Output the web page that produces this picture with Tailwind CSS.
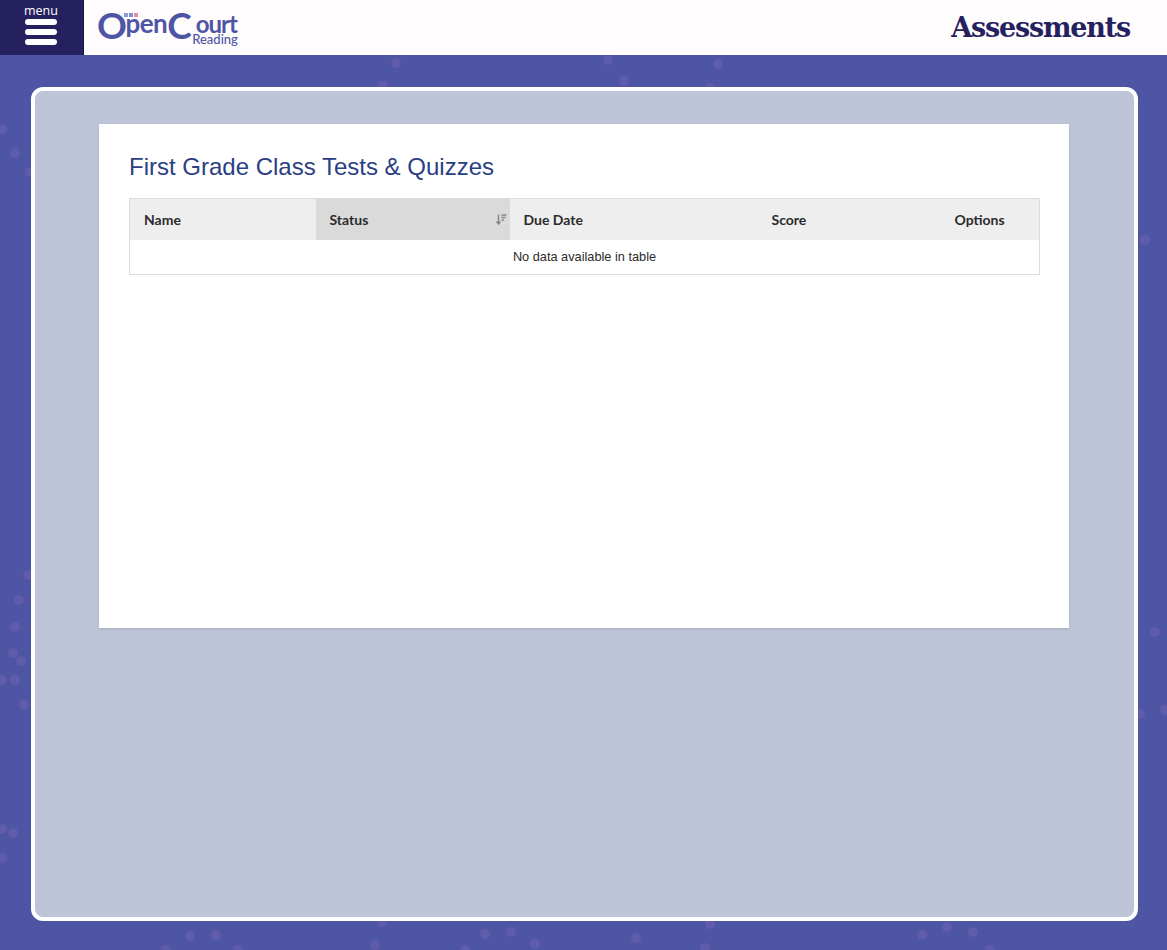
<!DOCTYPE html>
<html lang="en">
<head>
    <meta charset="UTF-8">
    <title>Assessments - Open Court Reading</title>
    <script src="https://cdn.jsdelivr.net/npm/@tailwindcss/browser@4"></script>
</head>
<body class="bg-[#4f55a5] font-['Lato',sans-serif]">
<div class="relative flex flex-col h-[950px] overflow-hidden">
    <!-- background dots -->
    <svg class="absolute inset-0" width="1167" height="950" fill="#5f5cab">
        <circle cx="396" cy="63" r="5"/><circle cx="608" cy="60" r="5"/><circle cx="624" cy="81" r="5"/><circle cx="718" cy="64" r="5"/><circle cx="383" cy="86" r="5"/><circle cx="710" cy="88" r="5"/>
        <circle cx="2" cy="129" r="5"/><circle cx="15" cy="153" r="5"/><circle cx="30" cy="172" r="5"/><circle cx="28" cy="575" r="5"/><circle cx="19" cy="600" r="5"/><circle cx="15" cy="627" r="5"/><circle cx="13" cy="653" r="5"/><circle cx="21" cy="661" r="5"/><circle cx="2" cy="680" r="5"/><circle cx="15" cy="680" r="5"/><circle cx="24" cy="705" r="5"/><circle cx="2" cy="829" r="5"/><circle cx="13" cy="833" r="5"/><circle cx="2" cy="858" r="5"/>
        <circle cx="1145" cy="240" r="5"/><circle cx="1155" cy="632" r="5"/><circle cx="1140" cy="714" r="5"/><circle cx="1165" cy="710" r="5"/>
        <circle cx="190" cy="936" r="5"/><circle cx="216" cy="935" r="5"/><circle cx="166" cy="950" r="5"/><circle cx="238" cy="950" r="5"/><circle cx="375" cy="945" r="5"/><circle cx="382" cy="922" r="5"/><circle cx="465" cy="950" r="5"/><circle cx="485" cy="934" r="5"/><circle cx="511" cy="932" r="5"/><circle cx="535" cy="944" r="5"/><circle cx="636" cy="938" r="5"/><circle cx="710" cy="924" r="5"/><circle cx="705" cy="948" r="5"/><circle cx="922" cy="935" r="5"/><circle cx="947" cy="927" r="5"/><circle cx="973" cy="932" r="5"/><circle cx="990" cy="950" r="5"/>
    </svg>

    <!-- Header -->
    <header class="relative flex items-center h-[55px] bg-[#fffcfd]">
        <button class="flex flex-col items-center w-[84px] h-[55px] bg-[#25215f] border-r border-[#14123f] pt-[4px] pr-[1px]">
            <span class="text-[12.5px] leading-[14px] text-white font-['Open_Sans',sans-serif]">menu</span>
            <span class="flex flex-col gap-[4px] mt-[1px]">
                <span class="block w-[32px] h-[6px] rounded-[3px] bg-white"></span>
                <span class="block w-[32px] h-[6px] rounded-[3px] bg-white"></span>
                <span class="block w-[32px] h-[6px] rounded-[3px] bg-white"></span>
            </span>
        </button>
        <!-- Logo -->
        <div class="relative flex items-start w-[145px] h-[55px] ml-[13px] text-[#4f55a5] font-['Lato',sans-serif] font-bold">
            <span class="text-[37px] leading-[36px] mt-[7px] tracking-[-1.5px]">O</span>
            <span class="text-[26px] leading-[26px] mt-[10px] tracking-[-0.5px]">pen</span>
            <span class="text-[37px] leading-[36px] mt-[7px] tracking-[-0.5px]">C</span>
            <div class="flex flex-col items-end ml-[1px] mt-[14px]">
                <span class="text-[24px] leading-[19px] tracking-[-1px] pr-[1px]">ourt</span>
                <span class="text-[13px] leading-[12px] font-medium">Reading</span>
            </div>
            <svg class="absolute left-[27px] top-[13px]" width="14" height="4">
                <rect x="0" y="0" width="4" height="4" fill="#8f9bd8"/><rect x="5" y="0" width="4" height="4" fill="#7f8fd8"/><rect x="10" y="0" width="4" height="4" fill="#e58f9e"/>
            </svg>
        </div>
        <h1 class="ml-auto mr-[37px] mt-[2px] text-[27px] tracking-[-1.2px] font-bold text-[#25215f] font-['DejaVu_Serif',serif]">Assessments</h1>
    </header>

    <!-- Main -->
    <main class="relative flex-1 pt-[32px] pb-[29px] px-[29px] pl-[31px]">
        <div class="h-full bg-[#bfc5d9] border-4 border-white rounded-[12px] pt-[33px] px-[64px]">
            <section class="w-[970px] h-[504px] bg-white shadow-[0_1px_3px_rgba(0,0,0,0.12)] px-[30px] pt-[28px]">
                <h2 class="text-[24px] leading-[30px] text-[#2a4083] font-['Liberation_Sans',sans-serif]">First Grade Class Tests &amp; Quizzes</h2>
                <table class="w-[911px] mt-[16px] table-fixed border border-[#dcdcdc] text-[#2b2b2b]">
                    <thead>
                        <tr class="h-[41px] bg-[#eeeeee] text-[14px] text-left">
                            <th class="w-[186px] pl-[14px] font-bold">Name</th>
                            <th class="relative w-[194px] pl-[14px] font-bold bg-[#dadada]">
                                Status
                                <svg class="absolute right-[3px] top-[15px]" width="11" height="11" viewBox="0 0 11 11" fill="none" stroke="#888" stroke-width="1.5">
                                    <path d="M2.5 0.5V9M0.5 7.5L2.5 10L4.5 7.5"/>
                                    <path d="M5.5 1H10.5M5.5 3.5H9.5M5.5 6H8"/>
                                </svg>
                            </th>
                            <th class="w-[248px] pl-[14px] font-bold">Due Date</th>
                            <th class="w-[183px] pl-[14px] font-bold">Score</th>
                            <th class="pl-[14px] font-bold">Options</th>
                        </tr>
                    </thead>
                    <tbody>
                        <tr class="h-[35px]">
                            <td colspan="5" class="text-center text-[12.75px] font-['Liberation_Sans',sans-serif]">No data available in table</td>
                        </tr>
                    </tbody>
                </table>
            </section>
        </div>
    </main>
</div>
</body>
</html>
